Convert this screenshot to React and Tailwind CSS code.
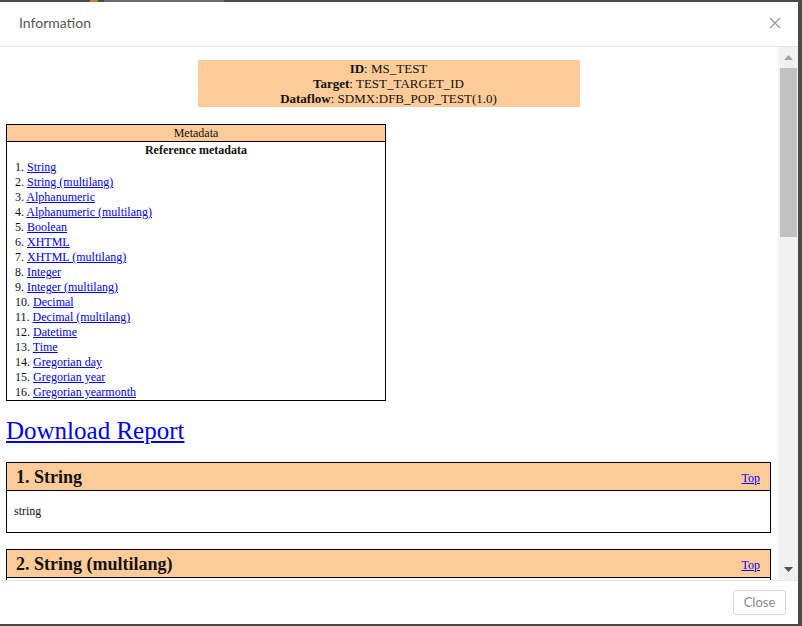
import React from 'react';

const items = [
  'String',
  'String (multilang)',
  'Alphanumeric',
  'Alphanumeric (multilang)',
  'Boolean',
  'XHTML',
  'XHTML (multilang)',
  'Integer',
  'Integer (multilang)',
  'Decimal',
  'Decimal (multilang)',
  'Datetime',
  'Time',
  'Gregorian day',
  'Gregorian year',
  'Gregorian yearmonth',
];

const Section = ({ index, title, value }) => (
  <div className="border border-black mb-[16px]">
    <div className="h-[28px] bg-[#ffcc99] border-b border-black flex items-center justify-between pl-[9px] pr-[10px]">
      <span className="text-[18px] font-bold leading-[20px]">
        {index}. {title}
      </span>
      <a href="#top" className="text-[12px] text-[#0000ee] underline mt-[3px]">
        Top
      </a>
    </div>
    <div className="px-[7px] py-[13px] text-[12px] leading-[15px] h-[41px]">{value}</div>
  </div>
);

export default function App() {
  return (
    <div className="w-[802px] h-[626px] bg-[#4a4a4a] overflow-hidden">
      {/* backdrop strip of the page behind */}
      <div className="h-[2px] flex">
        <div className="w-[90px]" />
        <div className="w-[8px] bg-[#b08a1e]" />
        <div className="w-[6px]" />
        <div className="w-[120px] bg-[#6a6a6a]" />
      </div>

      <div className="w-[798px] h-[622px] bg-white flex flex-col">
        {/* Header */}
        <div className="h-[45px] shrink-0 border-b border-[#e5e5e5] flex items-center justify-between pl-[19px] pr-[17px] pb-[3px] font-['Lato',sans-serif]">
          <span className="text-[14px] text-[#555]">Information</span>
          <svg width="12" height="12" viewBox="0 0 12 12" className="mt-[1px]">
            <path d="M1 1L11 11M11 1L1 11" stroke="#9a9a9a" strokeWidth="1.3" fill="none" />
          </svg>
        </div>

        {/* Body */}
        <div className="flex-1 flex min-h-0">
          <div className="flex-1 overflow-hidden pl-[6px] pr-[7px] font-['Liberation_Serif',serif] text-[#111]">
            <div className="flex justify-center pt-[13px]">
              <div className="w-[382px] bg-[#ffcc99] py-[1px] text-center text-[13px] leading-[15px]">
                <div>
                  <b>ID</b>: MS_TEST
                </div>
                <div>
                  <b>Target</b>: TEST_TARGET_ID
                </div>
                <div>
                  <b>Dataflow</b>: SDMX:DFB_POP_TEST(1.0)
                </div>
              </div>
            </div>

            {/* Metadata table */}
            <div className="w-[380px] border border-black mt-[17px]">
              <div className="h-[17px] bg-[#ffcc99] border-b border-black text-center text-[12px] leading-[16px]">
                Metadata
              </div>
              <div className="h-[17px] text-center text-[12px] font-bold leading-[17px]">
                Reference metadata
              </div>
              <ol className="pl-[8px] pt-[1px] text-[12px] leading-[15px]">
                {items.map((it, i) => (
                  <li key={it}>
                    {i + 1}.{' '}
                    <a href="#" className="text-[#0000ee] underline">
                      {it}
                    </a>
                  </li>
                ))}
              </ol>
            </div>

            <div className="mt-[15px] mb-[14px] leading-[29px]">
              <a href="#" className="text-[25px] text-[#0000ee] underline">
                Download Report
              </a>
            </div>

            <Section index={1} title="String" value="string" />
            <Section index={2} title="String (multilang)" value="" />
          </div>

          {/* Scrollbar */}
          <div className="w-[20px] shrink-0 bg-[#f1f1f1] flex flex-col items-center">
            <div className="h-[21px] flex items-center justify-center">
              <svg width="9" height="5" viewBox="0 0 9 5">
                <path d="M0 5L4.5 0L9 5Z" fill="#a3a3a3" />
              </svg>
            </div>
            <div className="w-[17px] h-[169px] bg-[#c1c1c1] ml-[1px]" />
            <div className="flex-1" />
            <div className="h-[21px] flex items-center justify-center">
              <svg width="9" height="5" viewBox="0 0 9 5">
                <path d="M0 0L9 0L4.5 5Z" fill="#505050" />
              </svg>
            </div>
          </div>
        </div>

        {/* Footer */}
        <div className="h-[44px] shrink-0 border-t border-[#e5e5e5] flex items-center justify-end pr-[12px] font-['Lato',sans-serif]">
          <button className="w-[53px] h-[25px] border border-[#d9d9d9] rounded-[3px] text-[13px] text-[#888] bg-white">
            Close
          </button>
        </div>
      </div>
    </div>
  );
}
